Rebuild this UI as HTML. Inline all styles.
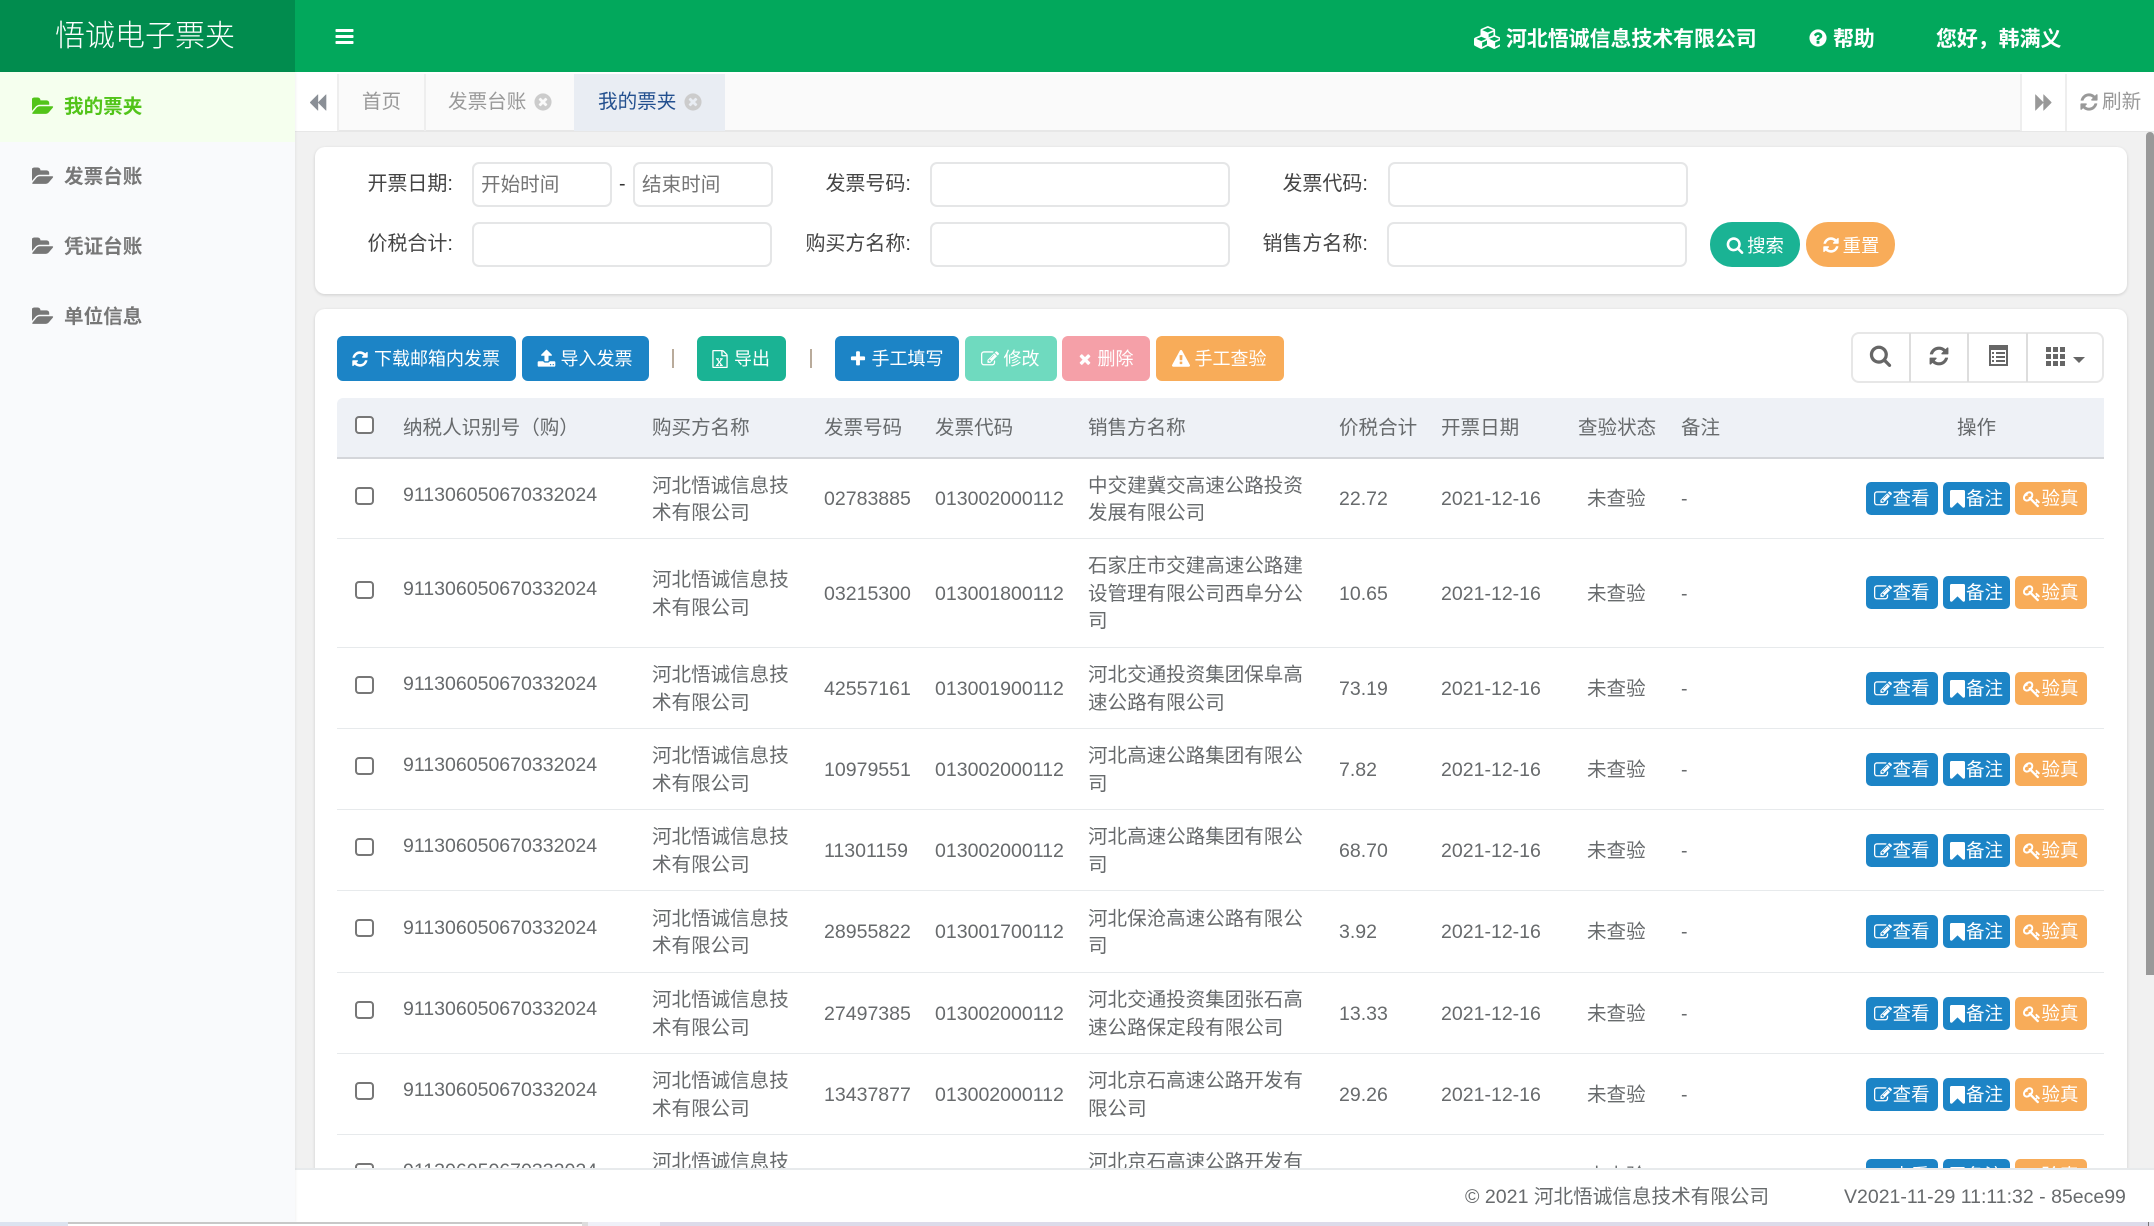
<!DOCTYPE html>
<html lang="zh-CN"><head><meta charset="utf-8"><title>悟诚电子票夹</title>
<style>
*{box-sizing:border-box}
html,body{margin:0;padding:0;width:2154px;height:1226px;overflow:hidden;background:#f1f1f1}
body{position:relative;font-family:"Liberation Sans","Noto Sans CJK SC",sans-serif;font-size:19.55px;color:#676a6c}
.a{position:absolute}
.t{position:absolute;white-space:nowrap}
svg{display:block;fill:currentColor}
.ic{position:absolute}
.tab{position:absolute;top:74px;height:57px;line-height:57px;font-size:19.6px;color:#999;white-space:nowrap}
.inp{position:absolute;height:45px;background:#fff;border:2px solid #e5e6e7;border-radius:7px;font-size:19.6px;line-height:43px;padding-left:7px;color:#757575;white-space:nowrap;overflow:hidden}
.lb{position:absolute;text-align:right;width:140px;font-size:20px;line-height:46px;color:#444;white-space:nowrap}
.btn{position:absolute;top:336px;height:45px;padding-bottom:2px;border-radius:6px;color:#fff;font-size:18px;display:flex;align-items:center;justify-content:center;white-space:nowrap}
.btn svg{margin-right:3px;position:relative;left:-2px;top:1px}
.pill{position:absolute;top:222px;height:45px;border-radius:22px;color:#fff;font-size:18.4px;display:flex;align-items:center;justify-content:center;white-space:nowrap}
.pill svg{margin-right:3px}
.r{position:absolute;left:337px;width:1767px;border-bottom:2px solid #e7eaec;background:#fff}
.c{position:absolute;top:3px;bottom:0;display:flex;align-items:center;line-height:27.5px;white-space:nowrap}
.id{top:2px;bottom:8px}
.chk{position:absolute;left:18px;width:19px;height:18px;border:2px solid #777;border-radius:4px;background:#fff;margin-top:1px}
.o{position:absolute;height:33px;padding-bottom:2px;border-radius:5px;color:#fff;font-size:18.5px;display:flex;align-items:center;justify-content:center;white-space:nowrap}
.o svg{position:relative;top:1px}
.o svg.m{margin-right:1px}
.bl{background:#1c84c6}.or{background:#f8ac59}
.h{position:absolute;top:398px;height:59px;line-height:61px;white-space:nowrap}
.side{position:absolute;left:0;width:295px;height:70px;font-size:19.6px;font-weight:bold;color:#777}
.side svg{position:absolute;left:32px;top:24px}
.side span{position:absolute;left:64px;top:0;line-height:70px}
</style></head><body>
<svg width="0" height="0" style="position:absolute">
<defs>
<symbol id="fo" viewBox="0 0 1920 1792"><path d="M1845 931q0 35-53 93l-336 396q-43 51-120.5 86.5t-143.5 35.5h-1088q-34 0-60.5-13t-26.5-43q0-35 53-93l336-396q43-51 120.5-86.5t143.5-35.5h1088q34 0 60.5 13t26.5 43zm-343-344v160h-832q-94 0-197 47.5t-164 119.5l-337 396-5 6q0-4-.5-12.5t-.5-12.5v-960q0-92 66-158t158-66h320q92 0 158 66t66 158v32h544q92 0 158 66t66 158z"/></symbol>
<symbol id="bars" viewBox="0 0 1792 1792"><path d="M1664 1344v128q0 26-19 45t-45 19h-1408q-26 0-45-19t-19-45v-128q0-26 19-45t45-19h1408q26 0 45 19t19 45zm0-512v128q0 26-19 45t-45 19h-1408q-26 0-45-19t-19-45v-128q0-26 19-45t45-19h1408q26 0 45 19t19 45zm0-512v128q0 26-19 45t-45 19h-1408q-26 0-45-19t-19-45v-128q0-26 19-45t45-19h1408q26 0 45 19t19 45z"/></symbol>
<symbol id="search" viewBox="0 0 1792 1792"><path d="M1216 832q0-185-131.5-316.5t-316.5-131.5-316.5 131.5-131.5 316.5 131.5 316.5 316.5 131.5 316.5-131.5 131.5-316.5zm512 832q0 52-38 90t-90 38q-54 0-90-38l-343-342q-179 124-399 124-143 0-273.5-55.5t-225-150-150-225-55.5-273.5 55.5-273.5 150-225 225-150 273.5-55.5 273.5 55.5 225 150 150 225 55.5 273.5q0 220-124 399l343 343q37 37 37 90z"/></symbol>
<symbol id="ref" viewBox="0 0 1792 1792"><path d="M1639 1056q0 5-1 7-64 268-268 434.5t-478 166.5q-146 0-282.5-55t-243.5-157l-129 129q-19 19-45 19t-45-19-19-45v-448q0-26 19-45t45-19h448q26 0 45 19t19 45-19 45l-137 137q71 66 161 102t187 36q134 0 250-65t186-179q11-17 53-117 8-23 30-23h192q13 0 22.5 9.5t9.5 22.5zm25-800v448q0 26-19 45t-45 19h-448q-26 0-45-19t-19-45 19-45l138-138q-148-137-349-137-134 0-250 65t-186 179q-11 17-53 117-8 23-30 23h-199q-13 0-22.5-9.5t-9.5-22.5v-7q65-268 270-434.5t480-166.5q146 0 284 55.5t245 156.5l130-129q19-19 45-19t45 19 19 45z"/></symbol>
<symbol id="plus" viewBox="0 0 1792 1792"><path d="M1600 736v192q0 40-28 68t-68 28h-416v416q0 40-28 68t-68 28h-192q-40 0-68-28t-28-68v-416h-416q-40 0-68-28t-28-68v-192q0-40 28-68t68-28h416v-416q0-40 28-68t68-28h192q40 0 68 28t28 68v416h416q40 0 68 28t28 68z"/></symbol>
<symbol id="times" viewBox="0 0 1792 1792"><path d="M1490 1322q0 40-28 68l-136 136q-28 28-68 28t-68-28l-294-294-294 294q-28 28-68 28t-68-28l-136-136q-28-28-28-68t28-68l294-294-294-294q-28-28-28-68t28-68l136-136q28-28 68-28t68 28l294 294 294-294q28-28 68-28t68 28l136 136q28 28 28 68t-28 68l-294 294 294 294q28 28 28 68z"/></symbol>
<symbol id="back" viewBox="0 0 1792 1792"><path d="M1683 141q19-19 32-13t13 32v1472q0 26-13 32t-32-13l-710-710q-9-9-13-19v710q0 26-13 32t-32-13l-710-710q-19-19-19-45t19-45l710-710q19-19 32-13t13 32v710q4-10 13-19z"/></symbol>
<symbol id="fwd" viewBox="0 0 1792 1792"><path d="M109 1651q-19 19-32 13t-13-32v-1472q0-26 13-32t32 13l710 710q9 9 13 19v-710q0-26 13-32t32 13l710 710q19 19 19 45t-19 45l-710 710q-19 19-32 13t-13-32v-710q-4 10-13 19z"/></symbol>
<symbol id="up" viewBox="0 0 1792 1792"><path d="M1344 1472q0-26-19-45t-45-19-45 19-19 45 19 45 45 19 45-19 19-45zm256 0q0-26-19-45t-45-19-45 19-19 45 19 45 45 19 45-19 19-45zm128-224v320q0 40-28 68t-68 28h-1472q-40 0-68-28t-28-68v-320q0-40 28-68t68-28h427q21 56 70.5 92t110.5 36h256q61 0 110.5-36t70.5-92h427q40 0 68 28t28 68zm-325-648q-17 40-59 40h-256v448q0 26-19 45t-45 19h-256q-26 0-45-19t-19-45v-448h-256q-42 0-59-40-17-39 14-69l448-448q18-19 45-19t45 19l448 448q31 30 14 69z"/></symbol>
<symbol id="edit" viewBox="0 0 1792 1792"><path d="M888 1184l116-116-152-152-116 116v56h96v96h56zm440-720q-16-16-33 1l-350 350q-17 17-1 33t33-1l350-350q17-17 1-33zm80 594v190q0 119-84.5 203.5t-203.5 84.5h-832q-119 0-203.5-84.5t-84.5-203.5v-832q0-119 84.5-203.5t203.5-84.5h832q63 0 117 25 15 7 18 23 3 17-9 29l-49 49q-14 14-32 8-23-6-45-6h-832q-66 0-113 47t-47 113v832q0 66 47 113t113 47h832q66 0 113-47t47-113v-126q0-13 9-22l64-64q15-15 35-7t20 29zm-96-738l288 288-672 672h-288v-288zm444 132l-92 92-288-288 92-92q28-28 68-28t68 28l152 152q28 28 28 68t-28 68z"/></symbol>
<symbol id="mark" viewBox="256 128 1280 1536"><path d="M1420 128q23 0 44 9 33 13 52.5 41t19.5 62v1289q0 34-19.5 62t-52.5 41q-19 8-44 8-48 0-83-32l-441-424-441 424q-36 33-83 33-23 0-44-9-33-13-52.5-41t-19.5-62v-1289q0-34 19.5-62t52.5-41q21-9 44-9h1048z"/></symbol>
<symbol id="key" viewBox="0 0 1792 1792"><path d="M832 512q0-80-56-136t-136-56-136 56-56 136q0 42 19 83-41-19-83-19-80 0-136 56t-56 136 56 136 136 56 136-56 56-136q0-42-19-83 41 19 83 19 80 0 136-56t56-136zm851 704q0 17-49 66t-66 49q-9 0-28.5-16t-36.5-33-38.5-40-24.5-26l-96 96 220 220q28 28 28 68 0 42-39 81t-81 39q-40 0-68-28l-671-671q-176 131-365 131-163 0-265.5-102.5t-102.5-265.5q0-160 95-313t248-248 313-95q163 0 265.5 102.5t102.5 265.5q0 189-131 365l355 355 96-96q-3-3-26-24.5t-40-38.5-33-36.5-16-28.5q0-17 49-66t66-49q13 0 23 10 6 6 46 44.5t82 79.5 86.5 86 73 78 28.5 41z"/></symbol>
<symbol id="warn" viewBox="0 0 1792 1792"><path d="M1024 1375v-190q0-14-9.5-23.5t-22.5-9.5h-192q-13 0-22.5 9.5t-9.5 23.5v190q0 14 9.5 23.5t22.5 9.5h192q13 0 22.5-9.5t9.5-23.5zm-2-374l18-459q0-12-10-19-13-11-24-11h-220q-11 0-24 11-10 7-10 21l17 457q0 10 10 16.5t24 6.5h185q14 0 23.5-6.5t10.5-16.5zm-14-934l768 1408q35 63-2 126-17 29-46.5 46t-63.5 17h-1536q-34 0-63.5-17t-46.5-46q-37-63-2-126l768-1408q17-31 47-49t65-18 65 18 47 49z"/></symbol>
<symbol id="q" viewBox="0 0 1792 1792"><path d="M1024 1376v-192q0-14-9-23t-23-9h-192q-14 0-23 9t-9 23v192q0 14 9 23t23 9h192q14 0 23-9t9-23zm256-672q0-88-55.5-163t-138.5-116-170-41q-243 0-371 213-15 24 8 42l132 100q7 6 19 6 16 0 25-12 53-68 86-92 34-24 86-24 48 0 85.5 26t37.5 59q0 38-20 61t-68 45q-63 28-115.5 86.5t-52.5 125.5v36q0 14 9 23t23 9h192q14 0 23-9t9-23q0-19 21.5-49.5t54.5-49.5q32-18 49-28.5t46-35 44.5-48 28-60.5 12.5-81zm384 192q0 209-103 385.5t-279.5 279.5-385.5 103-385.5-103-279.5-279.5-103-385.5 103-385.5 279.5-279.5 385.5-103 385.5 103 279.5 279.5 103 385.5z"/></symbol>
<symbol id="tc" viewBox="0 0 1792 1792"><path d="M1277 1122q0-26-19-45l-181-181 181-181q19-19 19-45 0-27-19-46l-90-90q-19-19-46-19-26 0-45 19l-181 181-181-181q-19-19-45-19-27 0-46 19l-90 90q-19 19-19 46 0 26 19 45l181 181-181 181q-19 19-19 45 0 27 19 46l90 90q19 19 46 19 26 0 45-19l181-181 181 181q19 19 45 19 27 0 46-19l90-90q19-19 19-46zm387-226q0 209-103 385.5t-279.5 279.5-385.5 103-385.5-103-279.5-279.5-103-385.5 103-385.5 279.5-279.5 385.5-103 385.5 103 279.5 279.5 103 385.5z"/></symbol>
<symbol id="cubes" viewBox="0 0 2048 1792"><path d="M640 1632l384-192v-314l-384 164v342zm-64-454l404-173-404-173-404 173zm1088 454l384-192v-314l-384 164v342zm-64-454l404-173-404-173-404 173zm-448-293l384-165v-266l-384 164v267zm-64-379l441-189-441-189-441 189zm1088 518v416q0 36-19 67t-52 47l-448 224q-25 14-57 14t-57-14l-448-224q-4-2-7-4-2 2-7 4l-448 224q-25 14-57 14t-57-14l-448-224q-33-16-52-47t-19-67v-416q0-38 21.5-70t56.5-48l434-186v-400q0-38 21.5-70t56.5-48l448-192q23-10 50-10t50 10l448 192q35 16 56.5 48t21.5 70v400l434 186q36 16 57 48t21 70z"/></symbol>
<symbol id="xls" viewBox="0 0 1792 1792"><path d="M1596 380q28 28 48 76t20 88v1152q0 40-28 68t-68 28h-1344q-40 0-68-28t-28-68v-1600q0-40 28-68t68-28h896q40 0 88 20t76 48zm-444-244v376h376q-10-29-22-41l-313-313q-12-12-41-22zm384 1528v-1024h-416q-40 0-68-28t-28-68v-416h-768v1536h1280zm-1043-181v106h281v-106h-75l103-161q5-7 10-16.5t7.5-13.5 3.5-4h2q1 4 5 10 2 4 4.5 7.5t6 8 6.5 8.5l107 161h-76v106h291v-106h-68l-192-273 195-282h67v-107h-279v107h74l-103 159q-4 7-10 16.5t-9 13.5l-2 3h-2q-1-4-5-10-6-11-17-23l-106-159h76v-107h-290v107h68l189 272-194 283h-68z"/></symbol>
</defs></svg>

<!-- header -->
<div class="a" style="left:0;top:0;width:2154px;height:72px;background:#02a85c"></div>
<div class="a" style="left:0;top:0;width:295px;height:72px;background:#018c4e"></div>
<div class="t" style="left:55px;top:0;line-height:73px;font-size:30px;color:#fff;font-weight:300">悟诚电子票夹</div>
<svg class="ic" style="left:334px;top:26px;color:#fff" width="21" height="21"><use href="#bars"/></svg>
<svg class="ic" style="left:1474px;top:26px;color:#fff" width="26" height="23"><use href="#cubes"/></svg>
<div class="t" style="left:1506px;top:0;line-height:79px;font-size:20.9px;font-weight:bold;color:#fff">河北悟诚信息技术有限公司</div>
<svg class="ic" style="left:1808px;top:28px;color:#fff" width="20" height="20"><use href="#q"/></svg>
<div class="t" style="left:1833px;top:0;line-height:79px;font-size:20.9px;font-weight:bold;color:#fff">帮助</div>
<div class="t" style="left:1936px;top:0;line-height:79px;font-size:20.9px;font-weight:bold;color:#fff">您好，韩满义</div>

<!-- tabs -->
<div class="a" style="left:295px;top:72px;width:1859px;height:2px;background:#fff"></div>
<div class="a" style="left:295px;top:74px;width:1859px;height:58px;background:#fafafa;border-bottom:2px solid #e7e7e7"></div>
<div class="a" style="left:295px;top:74px;width:44px;height:57px;background:#fff;border-right:2px solid #eee"></div>
<svg class="ic" style="left:308px;top:93px;color:#8a8f96" width="19" height="19"><use href="#back"/></svg>
<div class="tab" style="left:339px;width:87px;border-right:2px solid #eee;text-align:center">首页</div>
<div class="tab" style="left:426px;width:148px;padding-left:22px">发票台账</div>
<svg class="ic" style="left:533px;top:92px;color:#ccc" width="20" height="20"><use href="#tc"/></svg>
<div class="tab" style="left:574px;width:151px;padding-left:24px;background:#e9edf3;color:#23508f">我的票夹</div>
<svg class="ic" style="left:683px;top:92px;color:#ccc" width="20" height="20"><use href="#tc"/></svg>
<div class="a" style="left:2020px;top:74px;width:134px;height:57px;background:#fff;border-left:2px solid #eee"></div>
<div class="a" style="left:2065px;top:74px;width:2px;height:57px;background:#eee"></div>
<svg class="ic" style="left:2034px;top:93px;color:#999" width="20" height="19"><use href="#fwd"/></svg>
<svg class="ic" style="left:2079px;top:92px;color:#999" width="20" height="20"><use href="#ref"/></svg>
<div class="t" style="left:2102px;top:74px;line-height:57px;font-size:19.6px;color:#999">刷新</div>

<!-- search panel -->
<div class="a" style="left:315px;top:147px;width:1812px;height:147px;background:#fff;border-radius:10px;box-shadow:0 1px 3px rgba(0,0,0,.15)"></div>
<div class="lb" style="left:313px;top:161px">开票日期:</div>
<div class="inp" style="left:472px;top:162px;width:140px">开始时间</div>
<div class="t" style="left:619px;top:161px;line-height:46px;font-size:19.6px;color:#333">-</div>
<div class="inp" style="left:633px;top:162px;width:140px">结束时间</div>
<div class="lb" style="left:771px;top:161px">发票号码:</div>
<div class="inp" style="left:930px;top:162px;width:300px"></div>
<div class="lb" style="left:1228px;top:161px">发票代码:</div>
<div class="inp" style="left:1388px;top:162px;width:300px"></div>
<div class="lb" style="left:313px;top:221px">价税合计:</div>
<div class="inp" style="left:472px;top:222px;width:300px"></div>
<div class="lb" style="left:771px;top:221px">购买方名称:</div>
<div class="inp" style="left:930px;top:222px;width:300px"></div>
<div class="lb" style="left:1228px;top:221px">销售方名称:</div>
<div class="inp" style="left:1387px;top:222px;width:300px"></div>
<div class="pill" style="left:1710px;width:90px;background:#1ab394"><svg width="18" height="18"><use href="#search"/></svg>搜索</div>
<div class="pill" style="left:1806px;width:89px;background:#f8ac59"><svg width="18" height="18"><use href="#ref"/></svg>重置</div>

<!-- table panel -->
<div class="a" style="left:315px;top:309px;width:1812px;height:900px;background:#fff;border-radius:10px 10px 0 0;box-shadow:0 1px 3px rgba(0,0,0,.15)"></div>
<div class="btn" style="left:337px;width:179px;background:#1c84c6"><svg width="18" height="18"><use href="#ref"/></svg>下载邮箱内发票</div>
<div class="btn" style="left:522px;width:127px;background:#1c84c6"><svg width="19" height="19"><use href="#up"/></svg>导入发票</div>
<div class="a" style="left:672px;top:349px;width:2px;height:19px;background:#b9ab9b"></div>
<div class="btn" style="left:697px;width:89px;background:#1ab394"><svg width="18" height="18"><use href="#xls"/></svg>导出</div>
<div class="a" style="left:810px;top:349px;width:2px;height:19px;background:#b9ab9b"></div>
<div class="btn" style="left:835px;width:124px;background:#1c84c6"><svg width="18" height="18"><use href="#plus"/></svg>手工填写</div>
<div class="btn" style="left:965px;width:92px;background:#6fdabf"><svg width="18" height="18"><use href="#edit"/></svg>修改</div>
<div class="btn" style="left:1062px;width:88px;background:#f5a0a8"><svg width="16" height="16"><use href="#times"/></svg>删除</div>
<div class="btn" style="left:1156px;width:128px;background:#f8ac59"><svg width="18" height="18"><use href="#warn"/></svg>手工查验</div>

<div class="a" style="left:1851px;top:332px;width:253px;height:51px;border:2px solid #e7e7e7;border-radius:8px;background:#fff"></div>
<div class="a" style="left:1909px;top:333px;width:2px;height:49px;background:#ddd"></div>
<div class="a" style="left:1967px;top:333px;width:2px;height:49px;background:#ddd"></div>
<div class="a" style="left:2026px;top:333px;width:2px;height:49px;background:#ddd"></div>
<svg class="ic" style="left:1869px;top:344px;color:#666" width="23" height="23"><use href="#search"/></svg>
<svg class="ic" style="left:1928px;top:345px;color:#666" width="22" height="22"><use href="#ref"/></svg>
<svg class="ic" style="left:1989px;top:345px" width="19" height="21" viewBox="0 0 19 21"><path fill="#666" d="M0 0h19v21H0z"/><path fill="#fff" d="M2 5h15v14H2z"/><path fill="#666" d="M3 7h2v2H3zM7 7h9v2H7zM3 11h2v2H3zM7 11h9v2H7zM3 15h2v2H3zM7 15h9v2H7z"/></svg>
<svg class="ic" style="left:2046px;top:347px" width="19" height="19" viewBox="0 0 19 19"><path fill="#666" d="M0 0h5v5H0zM7 0h5v5H7zM14 0h5v5h-5zM0 7h5v5H0zM7 7h5v5H7zM14 7h5v5h-5zM0 14h5v5H0zM7 14h5v5H7zM14 14h5v5h-5z"/></svg>
<div class="a" style="left:2073px;top:357px;width:0;height:0;border:6px solid transparent;border-top:6px solid #666;border-bottom:0"></div>

<div class="a" style="left:337px;top:398px;width:1767px;height:61px;background:#eef1f6;border-bottom:2px solid #d4d6da;border-radius:6px 0 0 0"></div>
<div class="chk" style="left:355px;top:415px;border-color:#777;background:#fff"></div>
<div class="h" style="left:403px">纳税人识别号（购）</div>
<div class="h" style="left:652px">购买方名称</div>
<div class="h" style="left:824px">发票号码</div>
<div class="h" style="left:935px">发票代码</div>
<div class="h" style="left:1088px">销售方名称</div>
<div class="h" style="left:1339px">价税合计</div>
<div class="h" style="left:1441px">开票日期</div>
<div class="h" style="left:1578px">查验状态</div>
<div class="h" style="left:1681px">备注</div>
<div class="h" style="left:1957px">操作</div>

<!-- row 1 -->
<div class="r" style="top:459px;height:81px"><div class="chk" style="top:27px"></div><div class="c id" style="left:66px">911306050670332024</div><div class="c" style="left:315px">河北悟诚信息技<br>术有限公司</div><div class="c" style="left:487px">02783885</div><div class="c" style="left:598px">013002000112</div><div class="c" style="left:751px">中交建冀交高速公路投资<br>发展有限公司</div><div class="c" style="left:1002px">22.72</div><div class="c" style="left:1104px">2021-12-16</div><div class="c" style="left:1250px">未查验</div><div class="c" style="left:1344px">-</div>
<div class="o bl" style="left:1529px;top:23px;width:72px"><svg width="18" height="18"><use href="#edit"/></svg>查看</div><div class="o bl" style="left:1606px;top:23px;width:67px"><svg class="m" width="15" height="18"><use href="#mark"/></svg>备注</div><div class="o or" style="left:1678px;top:23px;width:72px"><svg width="18" height="18"><use href="#key"/></svg>验真</div></div>
<!-- row 2 -->
<div class="r" style="top:539px;height:110px"><div class="chk" style="top:41px"></div><div class="c id" style="left:66px">911306050670332024</div><div class="c" style="left:315px">河北悟诚信息技<br>术有限公司</div><div class="c" style="left:487px">03215300</div><div class="c" style="left:598px">013001800112</div><div class="c" style="left:751px">石家庄市交建高速公路建<br>设管理有限公司西阜分公<br>司</div><div class="c" style="left:1002px">10.65</div><div class="c" style="left:1104px">2021-12-16</div><div class="c" style="left:1250px">未查验</div><div class="c" style="left:1344px">-</div>
<div class="o bl" style="left:1529px;top:37px;width:72px"><svg width="18" height="18"><use href="#edit"/></svg>查看</div><div class="o bl" style="left:1606px;top:37px;width:67px"><svg class="m" width="15" height="18"><use href="#mark"/></svg>备注</div><div class="o or" style="left:1678px;top:37px;width:72px"><svg width="18" height="18"><use href="#key"/></svg>验真</div></div>
<!-- row 3 -->
<div class="r" style="top:648px;height:82px"><div class="chk" style="top:27px"></div><div class="c id" style="left:66px">911306050670332024</div><div class="c" style="left:315px">河北悟诚信息技<br>术有限公司</div><div class="c" style="left:487px">42557161</div><div class="c" style="left:598px">013001900112</div><div class="c" style="left:751px">河北交通投资集团保阜高<br>速公路有限公司</div><div class="c" style="left:1002px">73.19</div><div class="c" style="left:1104px">2021-12-16</div><div class="c" style="left:1250px">未查验</div><div class="c" style="left:1344px">-</div>
<div class="o bl" style="left:1529px;top:24px;width:72px"><svg width="18" height="18"><use href="#edit"/></svg>查看</div><div class="o bl" style="left:1606px;top:24px;width:67px"><svg class="m" width="15" height="18"><use href="#mark"/></svg>备注</div><div class="o or" style="left:1678px;top:24px;width:72px"><svg width="18" height="18"><use href="#key"/></svg>验真</div></div>
<!-- row 4 -->
<div class="r" style="top:729px;height:82px"><div class="chk" style="top:27px"></div><div class="c id" style="left:66px">911306050670332024</div><div class="c" style="left:315px">河北悟诚信息技<br>术有限公司</div><div class="c" style="left:487px">10979551</div><div class="c" style="left:598px">013002000112</div><div class="c" style="left:751px">河北高速公路集团有限公<br>司</div><div class="c" style="left:1002px">7.82</div><div class="c" style="left:1104px">2021-12-16</div><div class="c" style="left:1250px">未查验</div><div class="c" style="left:1344px">-</div>
<div class="o bl" style="left:1529px;top:24px;width:72px"><svg width="18" height="18"><use href="#edit"/></svg>查看</div><div class="o bl" style="left:1606px;top:24px;width:67px"><svg class="m" width="15" height="18"><use href="#mark"/></svg>备注</div><div class="o or" style="left:1678px;top:24px;width:72px"><svg width="18" height="18"><use href="#key"/></svg>验真</div></div>
<!-- row 5 -->
<div class="r" style="top:810px;height:82px"><div class="chk" style="top:27px"></div><div class="c id" style="left:66px">911306050670332024</div><div class="c" style="left:315px">河北悟诚信息技<br>术有限公司</div><div class="c" style="left:487px">11301159</div><div class="c" style="left:598px">013002000112</div><div class="c" style="left:751px">河北高速公路集团有限公<br>司</div><div class="c" style="left:1002px">68.70</div><div class="c" style="left:1104px">2021-12-16</div><div class="c" style="left:1250px">未查验</div><div class="c" style="left:1344px">-</div>
<div class="o bl" style="left:1529px;top:24px;width:72px"><svg width="18" height="18"><use href="#edit"/></svg>查看</div><div class="o bl" style="left:1606px;top:24px;width:67px"><svg class="m" width="15" height="18"><use href="#mark"/></svg>备注</div><div class="o or" style="left:1678px;top:24px;width:72px"><svg width="18" height="18"><use href="#key"/></svg>验真</div></div>
<!-- row 6 -->
<div class="r" style="top:891px;height:83px"><div class="chk" style="top:27px"></div><div class="c id" style="left:66px">911306050670332024</div><div class="c" style="left:315px">河北悟诚信息技<br>术有限公司</div><div class="c" style="left:487px">28955822</div><div class="c" style="left:598px">013001700112</div><div class="c" style="left:751px">河北保沧高速公路有限公<br>司</div><div class="c" style="left:1002px">3.92</div><div class="c" style="left:1104px">2021-12-16</div><div class="c" style="left:1250px">未查验</div><div class="c" style="left:1344px">-</div>
<div class="o bl" style="left:1529px;top:24px;width:72px"><svg width="18" height="18"><use href="#edit"/></svg>查看</div><div class="o bl" style="left:1606px;top:24px;width:67px"><svg class="m" width="15" height="18"><use href="#mark"/></svg>备注</div><div class="o or" style="left:1678px;top:24px;width:72px"><svg width="18" height="18"><use href="#key"/></svg>验真</div></div>
<!-- row 7 -->
<div class="r" style="top:973px;height:82px"><div class="chk" style="top:27px"></div><div class="c id" style="left:66px">911306050670332024</div><div class="c" style="left:315px">河北悟诚信息技<br>术有限公司</div><div class="c" style="left:487px">27497385</div><div class="c" style="left:598px">013002000112</div><div class="c" style="left:751px">河北交通投资集团张石高<br>速公路保定段有限公司</div><div class="c" style="left:1002px">13.33</div><div class="c" style="left:1104px">2021-12-16</div><div class="c" style="left:1250px">未查验</div><div class="c" style="left:1344px">-</div>
<div class="o bl" style="left:1529px;top:24px;width:72px"><svg width="18" height="18"><use href="#edit"/></svg>查看</div><div class="o bl" style="left:1606px;top:24px;width:67px"><svg class="m" width="15" height="18"><use href="#mark"/></svg>备注</div><div class="o or" style="left:1678px;top:24px;width:72px"><svg width="18" height="18"><use href="#key"/></svg>验真</div></div>
<!-- row 8 -->
<div class="r" style="top:1054px;height:82px"><div class="chk" style="top:27px"></div><div class="c id" style="left:66px">911306050670332024</div><div class="c" style="left:315px">河北悟诚信息技<br>术有限公司</div><div class="c" style="left:487px">13437877</div><div class="c" style="left:598px">013002000112</div><div class="c" style="left:751px">河北京石高速公路开发有<br>限公司</div><div class="c" style="left:1002px">29.26</div><div class="c" style="left:1104px">2021-12-16</div><div class="c" style="left:1250px">未查验</div><div class="c" style="left:1344px">-</div>
<div class="o bl" style="left:1529px;top:24px;width:72px"><svg width="18" height="18"><use href="#edit"/></svg>查看</div><div class="o bl" style="left:1606px;top:24px;width:67px"><svg class="m" width="15" height="18"><use href="#mark"/></svg>备注</div><div class="o or" style="left:1678px;top:24px;width:72px"><svg width="18" height="18"><use href="#key"/></svg>验真</div></div>
<!-- row 9 -->
<div class="r" style="top:1135px;height:82px"><div class="chk" style="top:27px"></div><div class="c id" style="left:66px">911306050670332024</div><div class="c" style="left:315px">河北悟诚信息技<br>术有限公司</div><div class="c" style="left:487px">14701518</div><div class="c" style="left:598px">013002000112</div><div class="c" style="left:751px">河北京石高速公路开发有<br>限公司</div><div class="c" style="left:1002px">50.50</div><div class="c" style="left:1104px">2021-12-16</div><div class="c" style="left:1250px">未查验</div><div class="c" style="left:1344px">-</div>
<div class="o bl" style="left:1529px;top:24px;width:72px"><svg width="18" height="18"><use href="#edit"/></svg>查看</div><div class="o bl" style="left:1606px;top:24px;width:67px"><svg class="m" width="15" height="18"><use href="#mark"/></svg>备注</div><div class="o or" style="left:1678px;top:24px;width:72px"><svg width="18" height="18"><use href="#key"/></svg>验真</div></div>

<!-- scrollbar -->
<div class="a" style="left:2146px;top:132px;width:8px;height:843px;background:#999;border-radius:4px 4px 0 0"></div>

<!-- footer -->
<div class="a" style="left:295px;top:1168px;width:1859px;height:54px;background:#fff;border-top:2px solid #e7eaec"></div>
<div class="t" style="left:1465px;top:1170px;line-height:54px;font-size:19.6px">© 2021 河北悟诚信息技术有限公司</div>
<div class="t" style="left:1844px;top:1170px;line-height:54px;font-size:19.5px">V2021-11-29 11:11:32 - 85ece99</div>

<!-- sidebar -->
<div class="a" style="left:0;top:72px;width:295px;height:1150px;background:#f9fafc;box-shadow:1px 0 2px rgba(0,0,0,.05)"></div>
<div class="side" style="top:72px;background:#f5ffee;color:#52c41a"><svg width="22" height="21"><use href="#fo"/></svg><span>我的票夹</span></div>
<div class="side" style="top:142px"><svg width="22" height="21"><use href="#fo"/></svg><span>发票台账</span></div>
<div class="side" style="top:212px"><svg width="22" height="21"><use href="#fo"/></svg><span>凭证台账</span></div>
<div class="side" style="top:282px"><svg width="22" height="21"><use href="#fo"/></svg><span>单位信息</span></div>

<!-- bottom strip -->
<div class="a" style="left:0;top:1222px;width:2154px;height:4px;background:#dcdbea"></div>
<div class="a" style="left:0;top:1222px;width:68px;height:4px;background:#dce3f0"></div>
<div class="a" style="left:68px;top:1222px;width:514px;height:4px;background:#fff;border-top:2px solid #c8c8c8"></div>
<div class="a" style="left:582px;top:1222px;width:6px;height:4px;background:#ddd"></div>
<div class="a" style="left:588px;top:1222px;width:72px;height:4px;background:#eff0f8"></div>
<div class="a" style="left:2148px;top:1222px;width:1px;height:4px;background:#777"></div>
</body></html>
